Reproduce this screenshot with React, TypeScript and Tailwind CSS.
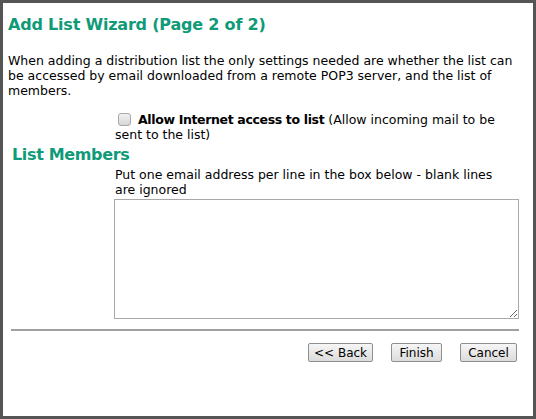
export default function App() {
  return (
    <div className="h-[419px] w-[536px] overflow-hidden bg-[#555555] p-[3px]">
      <div className="h-full w-full bg-white pl-[5px] pr-[14px] pt-[11px] text-[12.5px] leading-[15px] text-black [font-family:'DejaVu_Sans',Verdana,sans-serif]">
        <h1 className="text-[16px] font-bold leading-[22px] tracking-[-0.2px] text-[#0f9a78]">
          Add List Wizard (Page 2 of 2)
        </h1>

        <p className="mt-[17px]">
          When adding a distribution list the only settings needed are whether the list can be
          accessed by email downloaded from a remote POP3 server, and the list of members.
        </p>

        <div className="mt-[14px] pl-[107px]">
          <label className="block">
            <input
              type="checkbox"
              className="ml-[3px] mr-[7px] h-[13px] w-[13px] appearance-none rounded-[3px] border border-[#a8a8a8] bg-gradient-to-b from-[#f2f2f2] to-[#d6d6d6] align-[-2px]"
            />
            <b className="tracking-[-0.35px]">Allow Internet access to list</b> (Allow incoming
            mail to be sent to the list)
          </label>
        </div>

        <h2 className="ml-[4px] mt-[3px] text-[16px] font-bold leading-[20px] tracking-[-0.35px] text-[#0f9a78]">
          List Members
        </h2>

        <div className="mt-[2px] pl-[107px] pr-[22px]">
          Put one email address per line in the box below - blank lines are ignored
        </div>

        <textarea className="ml-[106px] mt-[2px] block h-[120px] w-[405px] resize border border-[#a9a9a9] bg-white" />

        <hr className="ml-[3px] mt-[10px] w-[508px] border-0 border-t-2 border-[#a0a0a0]" />

        <div className="mt-[12px] flex justify-end gap-[18px] pr-[2px]">
          <button className="h-[19px] w-[65px] rounded-[2px] border border-[#8f8f8f] bg-gradient-to-b from-[#f6f6f6] to-[#dcdcdc] text-[12px] leading-[16px]">
            {"<< Back"}
          </button>
          <button className="h-[19px] w-[51px] rounded-[2px] border border-[#8f8f8f] bg-gradient-to-b from-[#f6f6f6] to-[#dcdcdc] text-[12px] leading-[16px]">
            Finish
          </button>
          <button className="h-[19px] w-[57px] rounded-[2px] border border-[#8f8f8f] bg-gradient-to-b from-[#f6f6f6] to-[#dcdcdc] text-[12px] leading-[16px]">
            Cancel
          </button>
        </div>
      </div>
    </div>
  )
}
